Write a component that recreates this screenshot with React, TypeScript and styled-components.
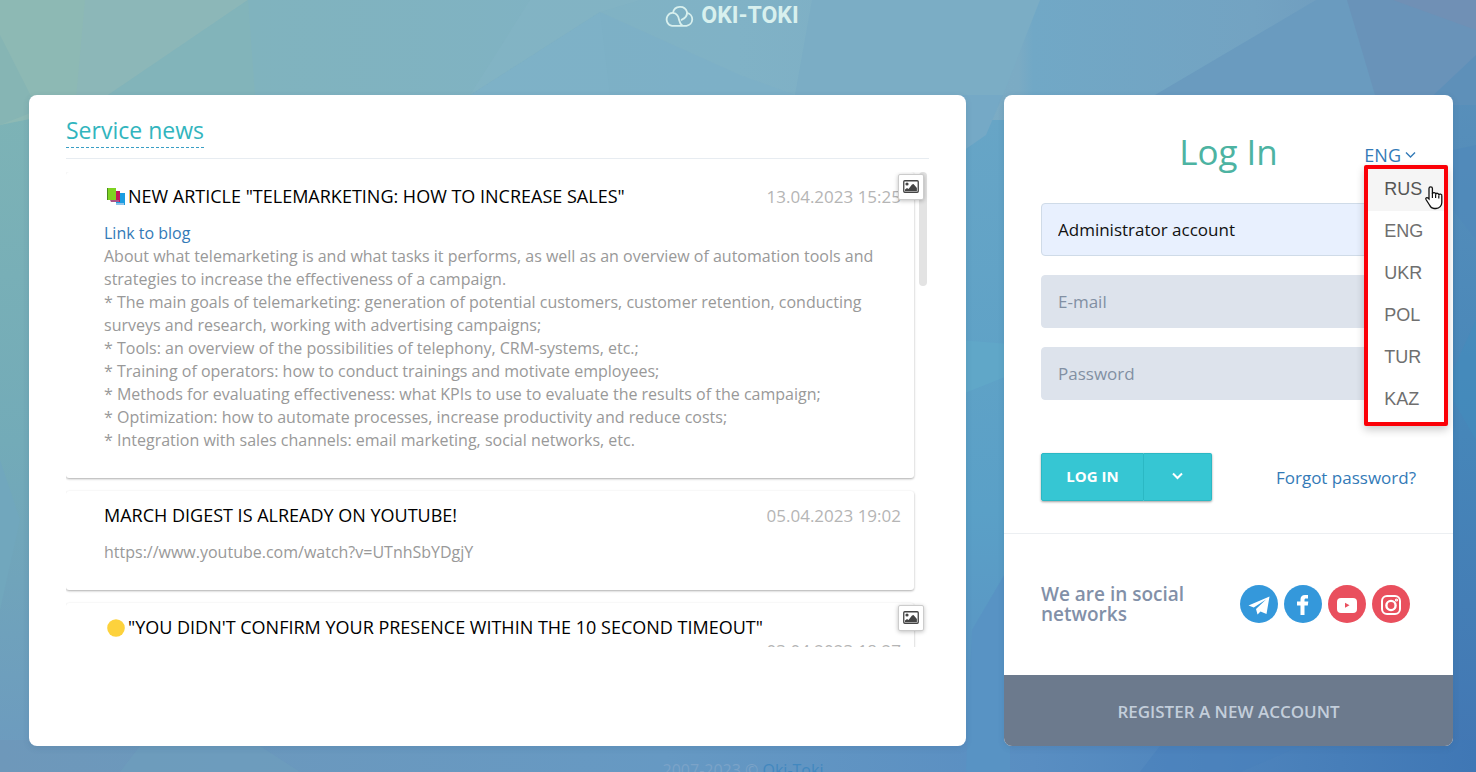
import React from 'react';
import styled, { createGlobalStyle } from 'styled-components';

const GlobalStyle = createGlobalStyle`
  *, *::before, *::after { box-sizing: border-box; }
  html { scrollbar-width: none; }
  body {
    margin: 0;
    font-family: "Open Sans", "Noto Sans", sans-serif;
    font-size: 16px;
    color: #333;
  }
  a { color: #337ab7; text-decoration: none; }
  button, input { font-family: inherit; }
`;

const Page = styled.div`
  position: relative;
  display: flex;
  flex-direction: column;
  min-height: 100vh;
  overflow: hidden;
`;

const Backdrop = styled.svg`
  position: absolute;
  inset: 0;
  width: 100%;
  height: 100%;
  z-index: -1;
`;

const Header = styled.header`
  display: flex;
  justify-content: center;
  align-items: center;
  height: 32px;
  padding-right: 12px;
  margin-bottom: 63px;
`;

const LogoLink = styled.a`
  display: flex;
  align-items: center;
  gap: 7px;
  color: #d8f0ee;
  font: 700 23px/32px Roboto, sans-serif;
`;

const Main = styled.main`
  display: grid;
  grid-template-columns: minmax(0, 1fr) 449px;
  gap: 38px;
  padding: 0 23px 0 29px;
`;

const Panel = styled.section`
  background: #fff;
  border-radius: 8px;
  box-shadow: 0 2px 6px rgba(40, 80, 120, 0.15);
`;

const NewsPanel = styled(Panel)`
  padding: 18px 37px 0;
`;

const NewsHeading = styled.h2`
  margin: 0 0 13px;
  padding-bottom: 10px;
  border-bottom: 1px solid #e7ecf1;
  font-size: 23px;
  font-weight: 400;
  line-height: 34px;
  display: flex;

  a {
    color: #32b5be;
    border-bottom: 1px dashed #3a9fc5;
  }
`;

const NewsScroller = styled.div`
  display: flex;
  justify-content: space-between;
  height: 475px;
  overflow: hidden;
`;

const NewsList = styled.div`
  flex: 1;
  display: flex;
  flex-direction: column;
  gap: 13px;
`;

const ScrollTrack = styled.div`
  width: 15px;

  &::before {
    content: "";
    display: block;
    width: 8px;
    height: 114px;
    margin-left: 5px;
    border-radius: 4px;
    background: #e3e3e3;
  }
`;

const NewsItem = styled.article`
  position: relative;
  flex: none;
  padding: 13px 13px 26px 38px;
  border-radius: 3px;
  background: #fff;
  box-shadow: 0 1px 3px rgba(0, 0, 0, 0.12), 0 1px 2px rgba(0, 0, 0, 0.22);
`;

const NewsTitleRow = styled.div`
  display: flex;
  flex-wrap: wrap;
  justify-content: space-between;
  column-gap: 16px;
  margin-bottom: 14px;
  line-height: 23px;
`;

const NewsTitle = styled.h3`
  display: flex;
  align-items: center;
  gap: 3px;
  margin: 0;
  font-size: 18px;
  font-weight: 500;
  color: #000;
`;

const NewsDate = styled.time`
  margin-left: auto;
  font-size: 17px;
  color: #b5b5b5;
`;

const NewsText = styled.div`
  line-height: 23px;
  color: #999;

  p { margin: 0; }
`;

const TitleIcon = styled.svg`
  width: 18px;
  height: 18px;
  margin-left: 3px;
`;

const PictureButton = styled.button`
  position: absolute;
  z-index: 1;
  top: 2px;
  right: -10px;
  display: flex;
  align-items: center;
  justify-content: center;
  width: 26px;
  height: 26px;
  padding: 0 0 2px;
  border: 1px solid #ccc;
  border-radius: 2px;
  background: #fff;
  box-shadow: 0 1px 4px rgba(0, 0, 0, 0.25);
`;

const LoginPanel = styled(Panel)`
  display: flex;
  flex-direction: column;
`;

const LoginForm = styled.form`
  padding: 33px 37px 32px;
  border-bottom: 1px solid #eceff2;
`;

const LoginHead = styled.div`
  display: grid;
  grid-template-columns: 1fr auto 1fr;
  align-items: center;
  margin-bottom: 27px;
`;

const LoginTitle = styled.h1`
  grid-column: 2;
  margin: 0;
  font-size: 35px;
  font-weight: 400;
  line-height: 48px;
  color: #4db3a2;
`;

const Language = styled.div`
  position: relative;
  justify-self: end;
`;

const LanguageToggle = styled.button`
  display: flex;
  align-items: center;
  gap: 4px;
  padding: 6px 0 0;
  border: 0;
  background: none;
  font-size: 18px;
  line-height: 24px;
  color: #337ab7;
`;

const LanguageMenu = styled.ul`
  position: absolute;
  z-index: 2;
  top: 28px;
  left: 0;
  width: 84px;
  margin: 0;
  padding: 0 0 1px;
  list-style: none;
  border: 4px solid #fb0007;
  border-radius: 2px;
  background: #fff;
  box-shadow: 0 4px 8px rgba(0, 0, 0, 0.2);
`;

const LanguageOption = styled.button<{ $active?: boolean }>`
  display: block;
  width: 100%;
  padding: 0 0 2px 16px;
  border: 0;
  background: ${(p) => (p.$active ? '#f5f5f5' : 'transparent')};
  font-family: "Liberation Sans", Arial, sans-serif;
  font-size: 18px;
  line-height: 40px;
  text-align: left;
  color: ${(p) => (p.$active ? '#555' : '#6f6f6f')};
`;

const Pointer = styled.svg`
  position: absolute;
  top: 16px;
  right: 0;
  width: 20px;
  height: 26px;
`;

const Field = styled.input<{ $filled?: boolean }>`
  display: block;
  width: 100%;
  height: 53px;
  margin-bottom: 19px;
  padding: 0 16px;
  border: 1px solid ${(p) => (p.$filled ? '#cfdbe8' : '#dde3ec')};
  border-radius: 4px;
  background: ${(p) => (p.$filled ? '#e8f0fe' : '#dde3ec')};
  font-size: 17px;
  color: #111;

  &::placeholder { color: #8290a3; opacity: 1; }
`;

const Actions = styled.div`
  display: flex;
  align-items: center;
  justify-content: space-between;
  padding-top: 34px;
  font-size: 17px;
`;

const SplitButton = styled.div`
  display: flex;
  height: 48px;
  border-radius: 2px;
  box-shadow: 0 1px 3px rgba(0, 0, 0, 0.2), 0 1px 2px rgba(0, 0, 0, 0.2);
`;

const ActionButton = styled.button<{ $wide?: boolean }>`
  display: flex;
  align-items: center;
  justify-content: center;
  width: ${(p) => (p.$wide ? 103 : 68)}px;
  padding: 0 0 2px;
  border: 1px solid #2bb8c4;
  border-left-width: ${(p) => (p.$wide ? 1 : 0)}px;
  border-radius: ${(p) => (p.$wide ? '2px 0 0 2px' : '0 2px 2px 0')};
  background: #36c6d3;
  font-size: 15px;
  font-weight: 700;
  color: #fff;
`;

const Social = styled.div`
  display: flex;
  flex: 1;
  align-items: center;
  justify-content: space-between;
  min-height: 141px;
  padding: 0 43px 2px 37px;
`;

const SocialTitle = styled.h2`
  width: 150px;
  margin: 0;
  font-size: 19px;
  font-weight: 600;
  line-height: 20px;
  color: #8290a8;
`;

const SocialLinks = styled.nav`
  display: flex;
  gap: 6px;
`;

const SocialLink = styled.a<{ $color: string }>`
  display: flex;
  width: 38px;
  height: 38px;
  border-radius: 50%;
  background: ${(p) => p.$color};
`;

const Register = styled.a`
  height: 71px;
  border-radius: 0 0 8px 8px;
  background: #6c7a8d;
  font-size: 17px;
  font-weight: 600;
  line-height: 74px;
  text-align: center;
  color: #c3cedb;
`;

const Footer = styled.footer`
  height: 26px;
  padding: 12px 0 0 10px;
  font-size: 16px;
  line-height: 24px;
  text-align: center;
  color: #7ba3c8;

  a { color: #4288bf; }
`;

const Chevron = ({ width }: { width: number }) => (
  <svg width="11" height="8" viewBox="0 0 11 8" aria-hidden="true">
    <path d="M1 1.5 5.5 6 10 1.5" fill="none" stroke="currentColor" strokeWidth={width} />
  </svg>
);

const Picture = () => (
  <svg width="16" height="13" viewBox="0 0 16 13" aria-hidden="true">
    <rect x=".75" y=".75" width="14.5" height="11.5" rx="1" fill="#fff" stroke="#444" strokeWidth="1.3" />
    <circle cx="4" cy="4" r="1.6" fill="#444" />
    <path d="M2 11V9.5l2-1.5 1.5 1L9 4.5 10.5 4 13.9 8v3z" fill="#444" />
  </svg>
);

const Facets = () => (
  <Backdrop viewBox="0 0 1476 772" preserveAspectRatio="none" aria-hidden="true">
    <defs>
      <linearGradient id="top" x1="0" y1="0" x2="1" y2="0">
        <stop offset="0" stopColor="#8cb9b6" />
        <stop offset=".17" stopColor="#80b3be" />
        <stop offset=".5" stopColor="#80b2c6" />
        <stop offset=".69" stopColor="#7babc4" />
        <stop offset=".7" stopColor="#71a8c6" />
        <stop offset=".85" stopColor="#73a3c2" />
        <stop offset="1" stopColor="#6993ba" />
      </linearGradient>
      <linearGradient id="left" x1="0" y1="0" x2="0" y2="1">
        <stop offset="0" stopColor="#7db3b6" />
        <stop offset=".5" stopColor="#73abb8" />
        <stop offset="1" stopColor="#6c9abf" />
      </linearGradient>
      <linearGradient id="middle" x1="0" y1="0" x2="0" y2="1">
        <stop offset="0" stopColor="#67a5c6" />
        <stop offset=".6" stopColor="#5aa0c7" />
        <stop offset="1" stopColor="#5a8fc2" />
      </linearGradient>
      <linearGradient id="right" x1="0" y1="0" x2="0" y2="1">
        <stop offset="0" stopColor="#588fba" />
        <stop offset=".5" stopColor="#4686b9" />
        <stop offset="1" stopColor="#4276b3" />
      </linearGradient>
      <linearGradient id="bottom" x1="0" y1="0" x2="1" y2="0">
        <stop offset="0" stopColor="#6e98ba" />
        <stop offset=".45" stopColor="#6699c3" />
        <stop offset=".7" stopColor="#598ec2" />
        <stop offset="1" stopColor="#3f77b5" />
      </linearGradient>
    </defs>
    <rect width="1476" height="300" fill="url(#top)" />
    <rect y="110" width="500" height="662" fill="url(#left)" />
    <rect x="500" y="120" width="730" height="652" fill="url(#middle)" />
    <rect x="1230" y="95" width="246" height="677" fill="url(#right)" />
    <rect y="740" width="1476" height="32" fill="url(#bottom)" />
    <path d="M0 0H248L108 95H0z" fill="#8cb7b8" />
    <path d="M0 0H85L75 110 0 125z" fill="#8db9b4" />
    <path d="M0 35 38 110 0 125z" fill="#86b5b4" />
    <path d="M248 0 255 95H108z" fill="#82b4ba" />
    <path d="M600 12 740 75V95H470z" fill="#7cafc8" opacity=".6" />
    <path d="M740 75 795 95H740z" fill="#7cafc8" opacity=".6" />
    <path d="M600 12 610 95H470z" fill="#7fb2c8" opacity=".6" />
    <path d="M600 12 640 0H530L470 95z" fill="#84b4c4" opacity=".6" />
    <path d="M812 0H1040L1003 95H795z" fill="#7badc5" />
    <path d="M1316 0H1476V95H1155z" fill="#6a9bbf" />
    <path d="M1347 0H1476V95H1375z" fill="#6993b9" />
    <path d="M1393 0H1476V30z" fill="#7090b5" />
    <path d="M1476 55 1423 105H1476z" fill="#5e90b9" />
    <path d="M950 95H1003L986 135 950 160z" fill="#75a9c6" />
    <path d="M960 340 1010 344V375L960 395z" fill="#60a7c8" />
    <path d="M1010 565 972 630 966 772H1010z" fill="#5893c4" />
    <path d="M1453 150 1476 145V240L1453 210z" fill="#5089bb" opacity=".7" />
    <path d="M1453 370 1476 320V440L1453 400z" fill="#438cbc" opacity=".6" />
    <path d="M0 460 20 520 0 610z" fill="#71a7bd" />
    <path d="M1160 746H1300L1240 772H1140z" fill="#477fbb" opacity=".5" />
    <path d="M140 746H260L300 772H120z" fill="#6e9fbd" opacity=".6" />
  </Backdrop>
);

type Item = {
  title: string;
  date: string;
  icon?: React.ReactNode;
  picture?: boolean;
  body?: React.ReactNode;
};

const books = (
  <TitleIcon viewBox="0 0 18 18" aria-hidden="true">
    <path d="M9 5h9v12H9z" fill="#1b9de2" />
    <path d="M9 15h8v2H9z" fill="#8fc3e8" />
    <path d="M5 3h8v11H5z" fill="#c2185b" />
    <path d="M3 12h9v2H4z" fill="#a58" />
    <path d="M0 0h9v12H1z" fill="#7ed321" />
    <path d="M0 0h1v12H0z" fill="#4b8b1d" />
  </TitleIcon>
);

const dot = (
  <TitleIcon viewBox="0 0 18 18" aria-hidden="true">
    <circle cx="9" cy="9" r="8.8" fill="#fdd23c" />
  </TitleIcon>
);

const items: Item[] = [
  {
    title: 'NEW ARTICLE "TELEMARKETING: HOW TO INCREASE SALES"',
    date: '13.04.2023 15:25',
    icon: books,
    picture: true,
    body: (
      <>
        <a href="#blog">Link to blog</a>
        <p>About what telemarketing is and what tasks it performs, as well as an overview of automation tools and strategies to increase the effectiveness of a campaign.</p>
        <p>* The main goals of telemarketing: generation of potential customers, customer retention, conducting surveys and research, working with advertising campaigns;</p>
        <p>* Tools: an overview of the possibilities of telephony, CRM-systems, etc.;</p>
        <p>* Training of operators: how to conduct trainings and motivate employees;</p>
        <p>* Methods for evaluating effectiveness: what KPIs to use to evaluate the results of the campaign;</p>
        <p>* Optimization: how to automate processes, increase productivity and reduce costs;</p>
        <p>* Integration with sales channels: email marketing, social networks, etc.</p>
      </>
    ),
  },
  {
    title: 'MARCH DIGEST IS ALREADY ON YOUTUBE!',
    date: '05.04.2023 19:02',
    body: <p>https://www.youtube.com/watch?v=UTnhSbYDgjY</p>,
  },
  {
    title: '"YOU DIDN\'T CONFIRM YOUR PRESENCE WITHIN THE 10 SECOND TIMEOUT"',
    date: '03.04.2023 18:27',
    icon: dot,
    picture: true,
  },
];

const languages = ['RUS', 'ENG', 'UKR', 'POL', 'TUR', 'KAZ'];

export default function App() {
  return (
    <Page>
      <GlobalStyle />
      <Facets />
      <Header>
        <LogoLink href="#home">
          <svg width="29" height="24" viewBox="0 0 29 24" fill="none" stroke="currentColor" strokeWidth="1.8" aria-hidden="true">
            <path d="M17.500 21.800H7A6 6.500 0 1 1 12.500 11.500C15 15 13 18.500 17.500 21.800H21.500A6.600 6.600 0 0 0 22 8.800" />
            <path d="M8 8.800A7.200 7.200 0 0 1 22 8C22.500 12 20 14.500 16 16.200" />
          </svg>
          OKI-TOKI
        </LogoLink>
      </Header>
      <Main>
        <NewsPanel>
          <NewsHeading>
            <a href="#news">Service news</a>
          </NewsHeading>
          <NewsScroller>
            <NewsList>
              {items.map((item) => (
                <NewsItem key={item.title}>
                  <NewsTitleRow>
                    <NewsTitle>
                      {item.icon}
                      {item.title}
                    </NewsTitle>
                    <NewsDate>{item.date}</NewsDate>
                  </NewsTitleRow>
                  {item.body && <NewsText>{item.body}</NewsText>}
                  {item.picture && (
                    <PictureButton type="button" aria-label="Show picture">
                      <Picture />
                    </PictureButton>
                  )}
                </NewsItem>
              ))}
            </NewsList>
            <ScrollTrack />
          </NewsScroller>
        </NewsPanel>
        <LoginPanel>
          <LoginForm onSubmit={(e) => e.preventDefault()}>
            <LoginHead>
              <LoginTitle>Log In</LoginTitle>
              <Language>
                <LanguageToggle type="button" aria-expanded="true">
                  ENG
                  <Chevron width={1.4} />
                </LanguageToggle>
                <LanguageMenu>
                  {languages.map((code, i) => (
                    <li key={code}>
                      <LanguageOption type="button" $active={i === 0}>{code}</LanguageOption>
                    </li>
                  ))}
                  <Pointer viewBox="0 0 20 26" aria-hidden="true">
                    <path
                      d="M5 14V3.500a1.700 1.700 0 0 1 3.400 0V9a1.600 1.600 0 0 1 3.200.5 1.600 1.600 0 0 1 3.200.8 1.500 1.500 0 0 1 3 .7v6.500c0 3-2.300 6-5.800 6H10c-2.500 0-3.500-1.500-4.500-3.500L2 14.500c-.8-1.500 1-2.500 2-1.500z"
                      fill="#fff"
                      stroke="#111"
                      strokeWidth="1.300"
                    />
                    <path d="M8.400 8.500V13M11.600 9.500V13M14.800 10.500V13.500" stroke="#111" strokeWidth="1.200" />
                  </Pointer>
                </LanguageMenu>
              </Language>
            </LoginHead>
            <Field $filled type="text" aria-label="Account" defaultValue="Administrator account" />
            <Field type="email" aria-label="E-mail" placeholder="E-mail" />
            <Field type="password" aria-label="Password" placeholder="Password" />
            <Actions>
              <SplitButton>
                <ActionButton $wide type="submit">LOG IN</ActionButton>
                <ActionButton type="button" aria-label="More ways to log in">
                  <Chevron width={2} />
                </ActionButton>
              </SplitButton>
              <a href="#forgot">Forgot password?</a>
            </Actions>
          </LoginForm>
          <Social>
            <SocialTitle>We are in social networks</SocialTitle>
            <SocialLinks>
              <SocialLink href="#telegram" aria-label="Telegram" $color="#3498db">
                <svg width="38" height="38" viewBox="0 0 38 38" fill="#fff">
                  <path d="M8.500 20.500 29.500 11.500 26.500 29 20.500 26.500 17.500 29.500 16 24 26 14.500 13.800 22.500z" />
                </svg>
              </SocialLink>
              <SocialLink href="#facebook" aria-label="Facebook" $color="#3498db">
                <svg width="38" height="38" viewBox="0 0 38 38" fill="#fff">
                  <path d="M16.500 30V20.500H13V16.500h3.500V14.500C16.500 11.500 18 10 21 10h3v3.500H22c-1.200 0-1.500.6-1.500 1.500v1.500h3.800L23.800 20.500H20.500V30z" />
                </svg>
              </SocialLink>
              <SocialLink href="#youtube" aria-label="YouTube" $color="#e94f5d">
                <svg width="38" height="38" viewBox="0 0 38 38">
                  <rect x="9" y="13" width="20" height="15" rx="4" fill="#fff" />
                  <path d="M17 17.800v5l4.500-2.500z" fill="#e94f5d" />
                </svg>
              </SocialLink>
              <SocialLink href="#instagram" aria-label="Instagram" $color="#e94f5d">
                <svg width="38" height="38" viewBox="0 0 38 38" fill="none" stroke="#fff" strokeWidth="2">
                  <rect x="10" y="11" width="18" height="18" rx="5" />
                  <circle cx="19" cy="20.500" r="4.600" strokeWidth="2.400" />
                  <circle cx="24.500" cy="15" r=".6" />
                </svg>
              </SocialLink>
            </SocialLinks>
          </Social>
          <Register href="#register">REGISTER A NEW ACCOUNT</Register>
        </LoginPanel>
      </Main>
      <Footer>
        2007-2023 © <a href="#about">Oki-Toki</a>
      </Footer>
    </Page>
  );
}
